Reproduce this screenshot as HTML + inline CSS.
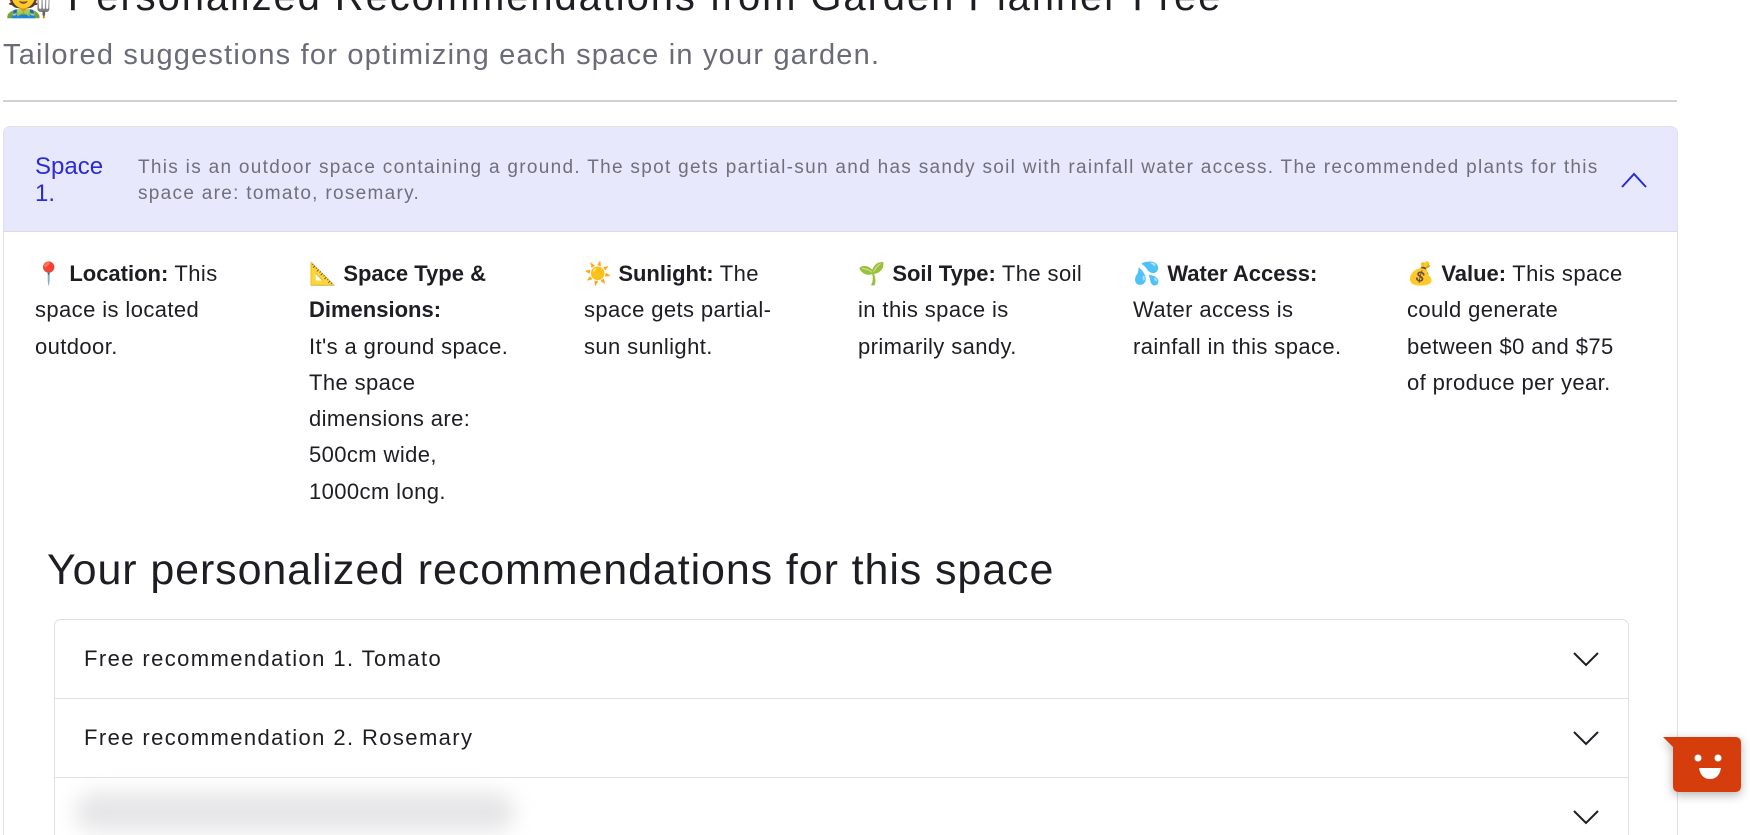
<!DOCTYPE html>
<html><head><meta charset="utf-8">
<style>
*{margin:0;padding:0;box-sizing:border-box}
html,body{width:1750px;height:835px;overflow:hidden}
body{background:#fff;font-family:"Liberation Sans","Noto Sans CJK JP",sans-serif;color:#1d1d24;position:relative}
.abs{position:absolute;white-space:nowrap}
.title{left:3px;top:-27px;font-size:40px;line-height:48px;color:#1d1d24;letter-spacing:1.9px}
.sub{left:3px;top:37px;font-size:29px;line-height:36px;color:#6b6b78;letter-spacing:1.2px}
.hr{left:3px;top:100px;width:1674px;height:2px;background:#d2d2d6}
.box{position:absolute;left:3px;top:126px;width:1675px;height:709px;border:1px solid #dfe1e8;border-bottom:none;border-radius:7px 7px 0 0;overflow:hidden}
.hd{position:absolute;left:0;top:0;width:100%;height:105px;background:#e7e8fc;border-bottom:1px solid #d9dbe6}
.sp{left:31px;top:26px;font-size:24px;line-height:27px;color:#2a2ad6}
.desc{left:134px;top:28px;font-size:19px;line-height:26px;color:#70707c;letter-spacing:1.3px}
.col{position:absolute;top:256px;font-size:22px;line-height:36.3px;color:#1d1d24;white-space:nowrap;letter-spacing:0.4px}
.col b{font-weight:bold;letter-spacing:0}
.h2{left:47px;top:542px;font-size:43px;line-height:56px;color:#1d1d24;letter-spacing:0.9px}
.card{position:absolute;left:54px;top:619px;width:1575px;height:216px;border:1px solid #e0e0e4;border-bottom:none;border-radius:7px 7px 0 0;overflow:hidden}
.row{position:absolute;left:0;width:100%;height:79px;border-bottom:1px solid #e0e0e4}
.row span{position:absolute;left:29px;top:26px;font-size:22px;line-height:26px;color:#1d1d24;letter-spacing:1.4px}
.chev{position:absolute;right:28px;top:30px}
.blur{position:absolute;left:20px;top:14px;width:440px;height:40px;background:#e6e6e8;filter:blur(10px);border-radius:20px}
</style></head><body>
<div class="abs title">🧑‍🌾 Personalized Recommendations from Garden Planner Free</div>
<div class="abs sub">Tailored suggestions for optimizing each space in your garden.</div>
<div class="abs hr"></div>
<div class="box">
 <div class="hd">
  <div class="abs sp">Space<br>1.</div>
  <div class="abs desc">This is an outdoor space containing a ground. The spot gets partial-sun and has sandy soil with rainfall water access. The recommended plants for this<br>space are: tomato, rosemary.</div>
  <svg class="abs" style="left:1616px;top:44px" width="28" height="18" viewBox="0 0 28 18"><path d="M2 16 L14 3 L26 16" fill="none" stroke="#2a2ad6" stroke-width="2"/></svg>
 </div>
</div>
<div class="col" style="left:35px">📍 <b>Location:</b> This<br>space is located<br>outdoor.</div>
<div class="col" style="left:309px">📐 <b>Space Type &amp;</b><br><b>Dimensions:</b><br>It's a ground space.<br>The space<br>dimensions are:<br>500cm wide,<br>1000cm long.</div>
<div class="col" style="left:584px">☀️ <b>Sunlight:</b> The<br>space gets partial-<br>sun sunlight.</div>
<div class="col" style="left:858px">🌱 <b>Soil Type:</b> The soil<br>in this space is<br>primarily sandy.</div>
<div class="col" style="left:1133px">💦 <b>Water Access:</b><br>Water access is<br>rainfall in this space.</div>
<div class="col" style="left:1407px">💰 <b>Value:</b> This space<br>could generate<br>between $0 and $75<br>of produce per year.</div>
<div class="abs h2">Your personalized recommendations for this space</div>
<div class="card">
 <div class="row" style="top:0"><span>Free recommendation 1. Tomato</span><svg class="chev" width="28" height="18" viewBox="0 0 28 18"><path d="M2 3 L14 15 L26 3" fill="none" stroke="#1d1d24" stroke-width="2"/></svg></div>
 <div class="row" style="top:79px"><span>Free recommendation 2. Rosemary</span><svg class="chev" width="28" height="18" viewBox="0 0 28 18"><path d="M2 3 L14 15 L26 3" fill="none" stroke="#1d1d24" stroke-width="2"/></svg></div>
 <div class="row" style="top:158px;border:none;height:58px"><div class="blur"></div><svg class="chev" width="28" height="18" viewBox="0 0 28 18"><path d="M2 3 L14 15 L26 3" fill="none" stroke="#1d1d24" stroke-width="2"/></svg></div>
</div>
<svg class="abs" style="left:1655px;top:730px" width="95" height="75" viewBox="0 0 95 75">
 <defs><filter id="s" x="-30%" y="-30%" width="160%" height="160%"><feDropShadow dx="0" dy="3" stdDeviation="5" flood-opacity="0.3"/></filter></defs>
 <path d="M8 7 L80 7 Q86 7 86 13 L86 56 Q86 62 80 62 L24 62 Q18 62 18 56 L18 17 Z" fill="#d63c0e" filter="url(#s)"/>
 <circle cx="43" cy="28" r="3.5" fill="#fff"/><circle cx="63" cy="28" r="3.5" fill="#fff"/>
 <path d="M44 38 L66 38 Q64 49 55 49 Q46 49 44 38 Z" fill="#fff"/>
</svg>
</body></html>
